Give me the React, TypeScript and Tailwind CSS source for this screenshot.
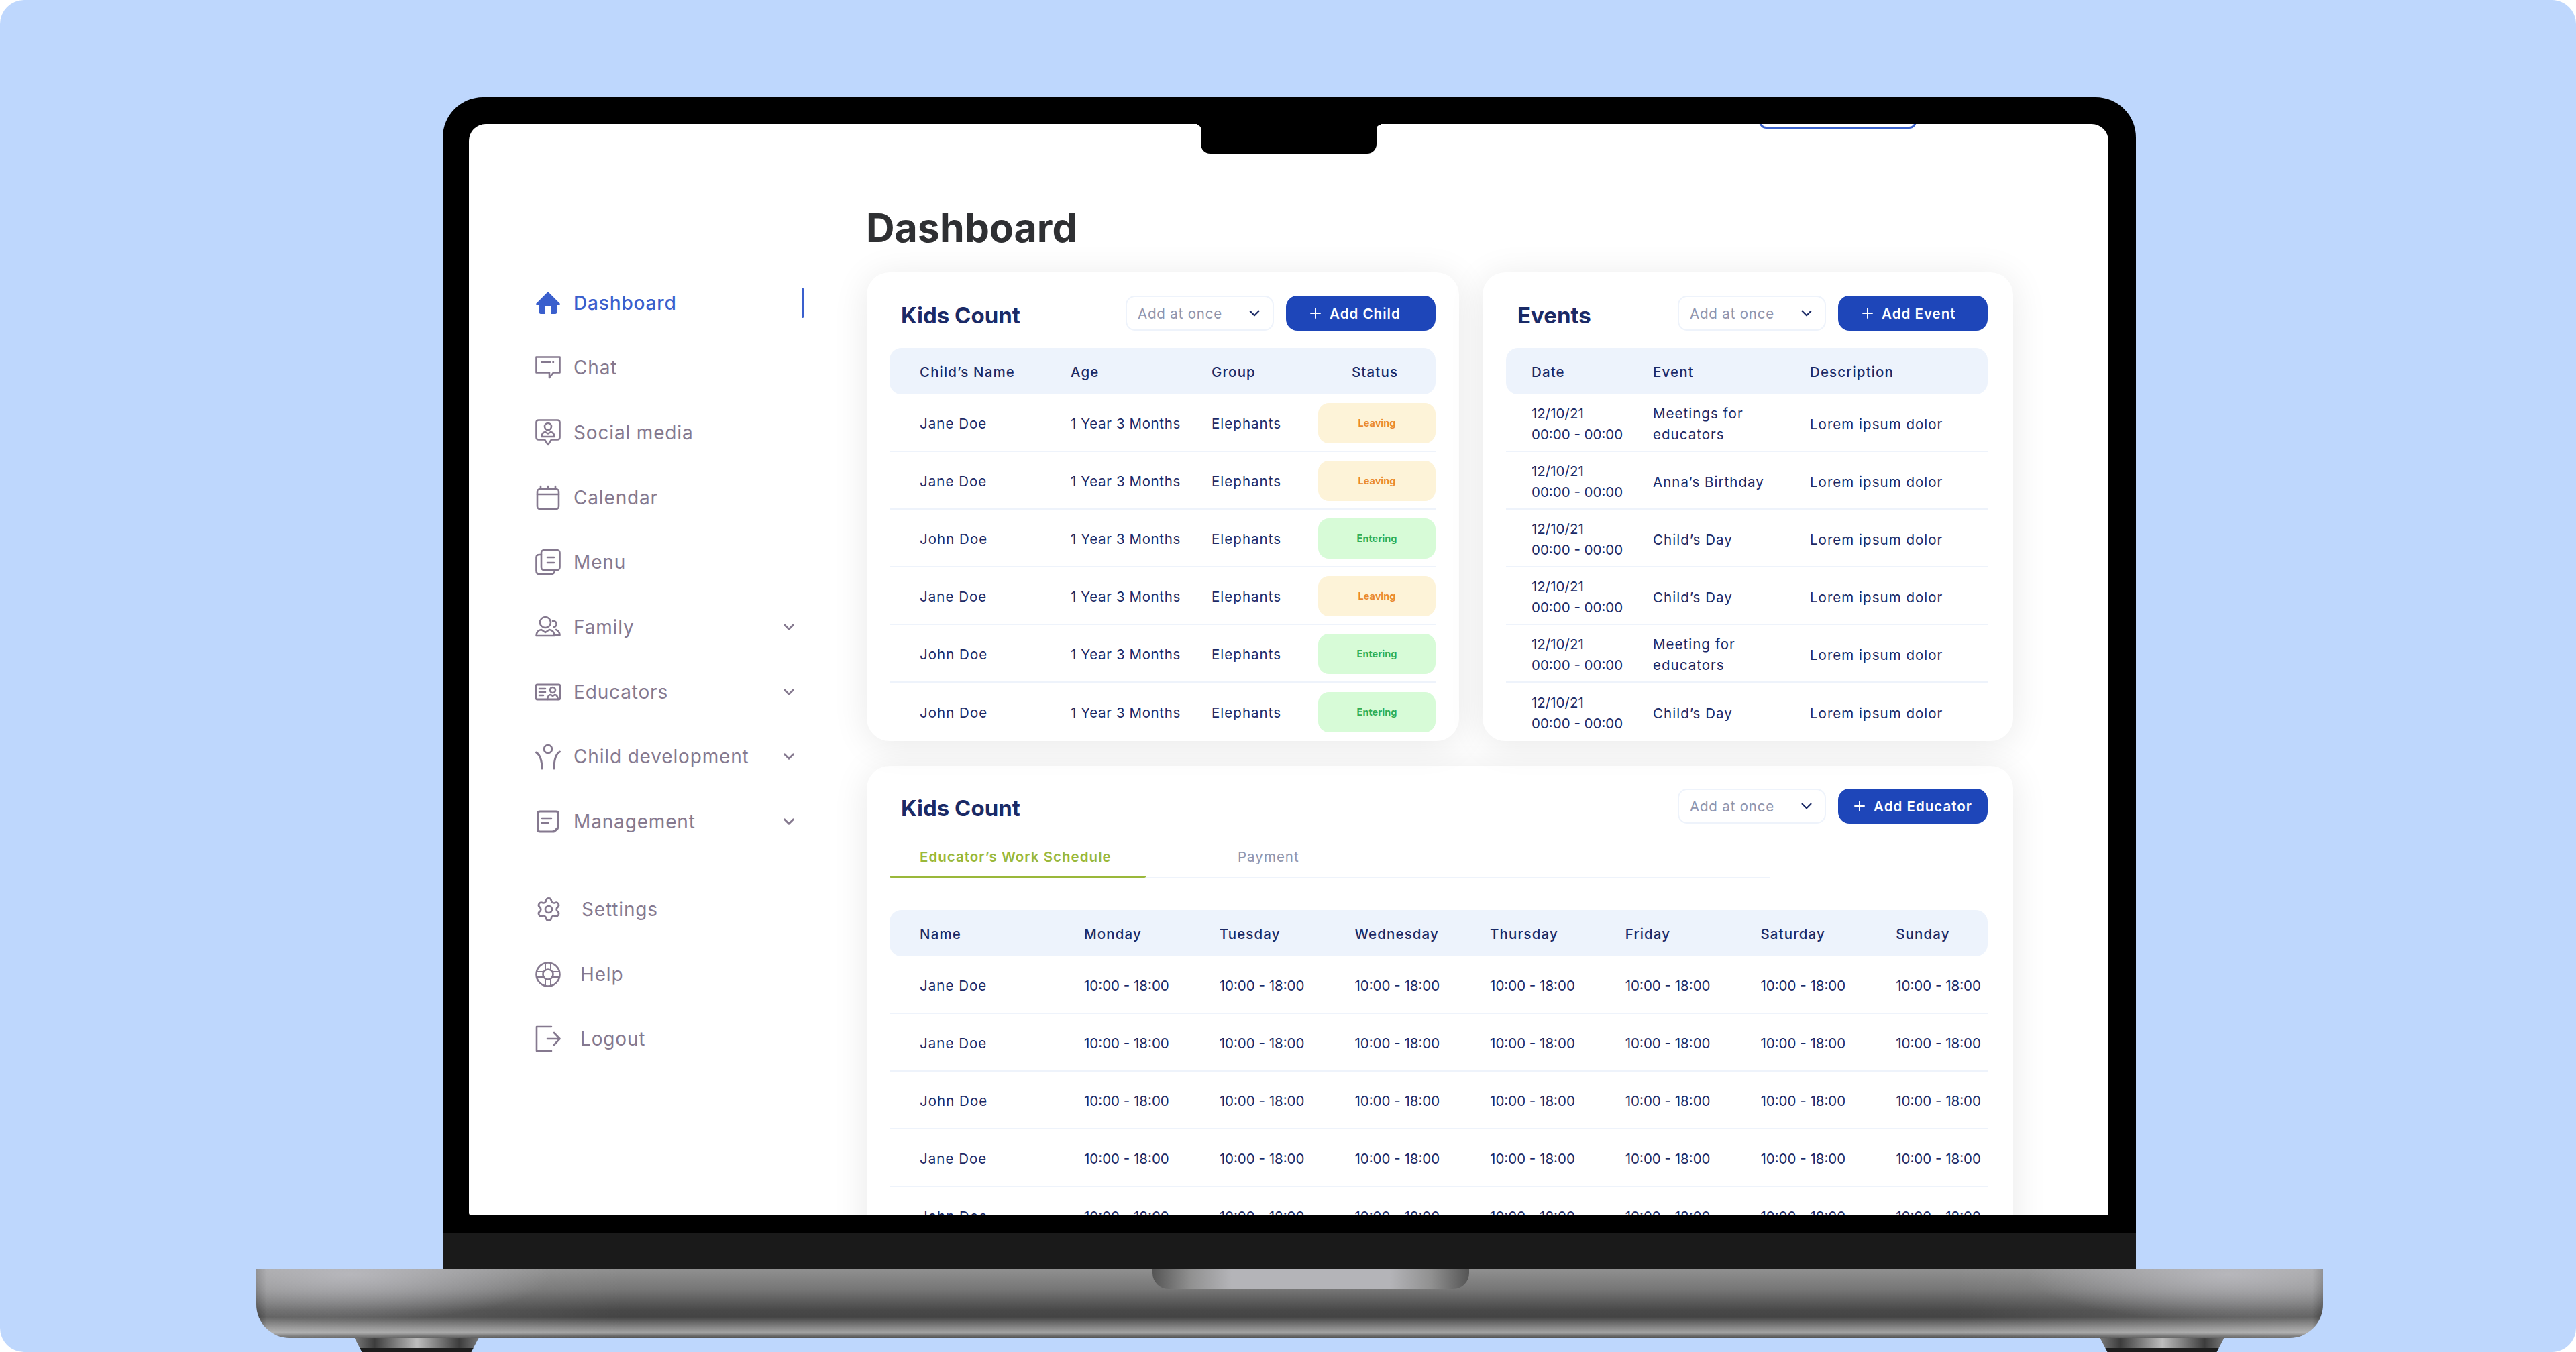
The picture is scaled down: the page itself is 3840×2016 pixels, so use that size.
import React from 'react';
import { Settings, Plus, ChevronDown } from 'lucide-react';

const NAVY = 'text-[#1b2a66]';
const CELL = 'text-[20.5px] tracking-[0.05em]';

const IconHome = () => (
    <svg width="38" height="40" viewBox="0 0 38 40" fill="#3a5fcd">
        <path d="M19 3 L37 21 Q37.5 23 35 23 L32 23 L32 34 Q32 36 30 36 L24 36 L24 25 L14 25 L14 36 L8 36 Q6 36 6 34 L6 23 L3 23 Q0.5 23 1 21 Z" />
    </svg>
);

const stroke = { fill: 'none', stroke: '#85798f', strokeWidth: 2.6, strokeLinecap: 'round' as const, strokeLinejoin: 'round' as const };

const IconChat = () => (
    <svg width="38" height="40" viewBox="0 0 38 40" {...stroke}>
        <path d="M1.5 4.5 H36.5 V27.5 H27 L21 35 V27.5 H1.5 Z" />
        <path d="M10 12 H22 M26.5 12 H27" />
    </svg>
);
const IconSocial = () => (
    <svg width="38" height="40" viewBox="0 0 38 40" {...stroke}>
        <path d="M5 1.5 H33 Q36.5 1.5 36.5 5 V27 Q36.5 30.5 33 30.5 H24 L19 38 L14 30.5 H5 Q1.5 30.5 1.5 27 V5 Q1.5 1.5 5 1.5 Z" />
        <circle cx="19" cy="11" r="5" />
        <path d="M9.5 26 Q10 19.5 15 19 L19 21.5 L23 19 Q28 19.5 28.5 26 Z" />
    </svg>
);
const IconCalendar = () => (
    <svg width="38" height="40" viewBox="0 0 38 40" {...stroke}>
        <rect x="3" y="7" width="32" height="30" rx="4" />
        <path d="M3 15 H35 M8 3 V7 M19 3 V7 M30 3 V7" />
    </svg>
);
const IconMenu = () => (
    <svg width="38" height="40" viewBox="0 0 38 40" {...stroke}>
        <rect x="9" y="2" width="27.5" height="30" rx="4" />
        <path d="M9 9 H6 Q1.5 9 1.5 13 V33 Q1.5 38 6 38 H24 Q29 38 29 32" />
        <path d="M18 13 H28 M18 21 H28" />
    </svg>
);
const IconFamily = () => (
    <svg width="38" height="40" viewBox="0 0 38 40" {...stroke}>
        <circle cx="15" cy="13" r="8" />
        <path d="M1.5 33 Q2 25 9 24 L15 28 L21 24 Q28 25 28.5 33 Z" />
        <path d="M26 11 A4.5 4.5 0 1 1 28 20 M31 24 Q36 26 36.5 32 H31" />
    </svg>
);
const IconEducators = () => (
    <svg width="38" height="40" viewBox="0 0 38 40" {...stroke}>
        <rect x="1.5" y="9" width="35" height="22" rx="1.5" strokeWidth="3" />
        <path d="M6 15 H15 M6 20 H15 M6 25 H12" />
        <circle cx="26" cy="17" r="4" />
        <path d="M18 31 Q19 24 23 24 L26 26 L29 24 Q33 24 34 31" />
    </svg>
);
const IconChild = () => (
    <svg width="38" height="40" viewBox="0 0 38 40" {...stroke}>
        <circle cx="19" cy="9" r="6" />
        <path d="M1.5 14 Q10 20 10 38 M36.5 13 Q28 18 28 38" strokeWidth="3" />
    </svg>
);
const IconManagement = () => (
    <svg width="38" height="40" viewBox="0 0 38 40" {...stroke}>
        <path d="M7 5 H31 Q34.5 5 34.5 8.5 V28 L28 35 H7 Q3.5 35 3.5 31.5 V8.5 Q3.5 5 7 5 Z" strokeWidth="3" />
        <path d="M10 15 H24 M10 22 H19 M34 27 Q34 34 27 34" />
    </svg>
);
const IconHelp = () => (
    <svg width="38" height="40" viewBox="0 0 38 40" {...stroke}>
        <circle cx="19" cy="20" r="17.5" />
        <circle cx="19" cy="20" r="7.5" />
        <path d="M15 4 V13 M23 4 V13 M15 27 V36 M23 27 V36 M3 16 H12 M3 24 H12 M26 16 H35 M26 24 H35" strokeWidth="2" />
    </svg>
);
const IconLogout = () => (
    <svg width="38" height="40" viewBox="0 0 38 40" {...stroke}>
        <path d="M24 2 H2 V38 H24" />
        <path d="M18 20 H36 M28 11 L36.5 20 L28 29" />
    </svg>
);

const mainNav = [
    { label: 'Chat', icon: <IconChat /> },
    { label: 'Social media', icon: <IconSocial /> },
    { label: 'Calendar', icon: <IconCalendar /> },
    { label: 'Menu', icon: <IconMenu /> },
    { label: 'Family', icon: <IconFamily />, chevron: true },
    { label: 'Educators', icon: <IconEducators />, chevron: true },
    { label: 'Child development', icon: <IconChild />, chevron: true },
    { label: 'Management', icon: <IconManagement />, chevron: true },
];

const bottomNav = [
    { label: 'Settings', icon: <Settings size={40} strokeWidth={1.6} color="#85798f" /> },
    { label: 'Help', icon: <IconHelp /> },
    { label: 'Logout', icon: <IconLogout /> },
];

const kids = [
    { name: 'Jane Doe', status: 'Leaving' },
    { name: 'Jane Doe', status: 'Leaving' },
    { name: 'John Doe', status: 'Entering' },
    { name: 'Jane Doe', status: 'Leaving' },
    { name: 'John Doe', status: 'Entering' },
    { name: 'John Doe', status: 'Entering' },
];

const events = [
    ['Meetings for', 'educators'],
    ['Anna’s Birthday'],
    ['Child’s Day'],
    ['Child’s Day'],
    ['Meeting for', 'educators'],
    ['Child’s Day'],
];

const days = ['Monday', 'Tuesday', 'Wednesday', 'Thursday', 'Friday', 'Saturday', 'Sunday'];
const educators = ['Jane Doe', 'Jane Doe', 'John Doe', 'Jane Doe', 'John Doe'];

const Controls: React.FC<{ label: string; buttonPad?: string }> = ({ label, buttonPad = 'pl-[32px]' }) => (
    <div className="flex gap-[18px] ml-auto">
        <div className="w-[221px] h-[52px] pt-[3px] rounded-[14px] border-2 border-[#eef3fb] flex items-center justify-between pl-[16px] pr-[14px] text-[20.5px] text-[#8e94ad] tracking-[0.04em]">
            Add at once
            <ChevronDown size={26} strokeWidth={2} color="#1b2a66" className="-mt-[3px]" />
        </div>
        <div className={`w-[223px] h-[52px] pt-[2px] rounded-[17px] bg-[#1e46b9] flex items-center gap-[9px] text-[20.5px] font-semibold text-white tracking-[0.05em] ${buttonPad}`}>
            <Plus size={24} strokeWidth={2} className="-mt-[2px]" />
            {label}
        </div>
    </div>
);

const Card: React.FC<{ className: string; children: React.ReactNode }> = ({ className, children }) => (
    <section className={`bg-white rounded-[34px] shadow-[0_6px_54px_rgba(0,0,0,0.09)] overflow-hidden ${className}`}>
        {children}
    </section>
);

const HeaderRow: React.FC<{ className: string; children: React.ReactNode }> = ({ className, children }) => (
    <div className={`grid h-[69px] pt-[3px] items-center rounded-[18px] bg-[#edf3fc] text-[20.5px] tracking-[0.055em] font-medium ${NAVY} ${className}`}>
        {children}
    </div>
);

export default function App() {
    return (
        <div className="w-[3840px] h-[2016px] bg-white overflow-hidden [font-family:Inter,'Liberation_Sans',sans-serif]">
            <div className="w-full h-full rounded-[36px] bg-[#bed7fd] flex flex-col items-center pt-[145px] pl-[4px]">
                {/* lid */}
                <div className="w-[2524px] h-[1747px] rounded-t-[60px] bg-black flex flex-col">
                    <div className="h-[1693px] pl-[39px] pr-[41px] pt-[40px]">
                        <div className="relative w-[2444px] h-[1627px] bg-white rounded-t-[25px] rounded-b-[4px] overflow-hidden flex">
                            {/* notch */}
                            <div className="absolute z-10 top-0 left-[1091px] w-[262px] h-[44px] bg-black rounded-b-[14px]" />
                            <div className="absolute z-10 top-0 left-[1085px] w-[6px] h-[8px] bg-[radial-gradient(circle_at_0_100%,transparent_6px,#000_7px)]" />
                            <div className="absolute z-10 top-0 left-[1353px] w-[6px] h-[8px] bg-[radial-gradient(circle_at_100%_100%,transparent_6px,#000_7px)]" />
                            {/* scrolled-off button */}
                            <div className="absolute -top-[40px] left-[1923px] w-[235px] h-[47px] rounded-[11px] border-[3px] border-[#3b62cc]" />

                            <aside className="w-[593px] shrink-0 pl-[99px] pt-[218px] text-[28px] tracking-[0.03em] text-[#85798f]">
                                <div className="w-[400px] h-[97px] flex items-center gap-[19px] text-[#3a5fcd] font-medium">
                                    <IconHome />
                                    Dashboard
                                    <span className="ml-auto w-[3px] h-[45px] rounded-full bg-[#3a5fcd]" />
                                </div>
                                {mainNav.map(item => (
                                    <div key={item.label} className="w-[387px] h-[96.7px] flex items-center gap-[19px]">
                                        {item.icon}
                                        {item.label}
                                        {item.chevron && (
                                            <ChevronDown size={26} strokeWidth={2.6} className="ml-auto -mr-[4px]" color="#85798f" />
                                        )}
                                    </div>
                                ))}
                                <div className="mt-[34px]">
                                    {bottomNav.map(item => (
                                        <div key={item.label} className="h-[96.7px] flex items-center gap-[29px]">
                                            {item.icon}
                                            {item.label}
                                        </div>
                                    ))}
                                </div>
                            </aside>

                            <main className="w-[1709px] shrink-0 pt-[120px]">
                                <h1 className="text-[59px] leading-[70px] font-bold text-[#2f3033] mb-[31px] -ml-[1px]">Dashboard</h1>

                                <div className="flex gap-[35px] mb-[37px]">
                                    <Card className="w-[883px] h-[699px] pt-[35px] pl-[34px] pr-[35px]">
                                        <div className="flex items-center h-[52px] mb-[26px]">
                                            <h2 className={`pl-[17px] mt-[8px] text-[33px] font-bold ${NAVY}`}>Kids Count</h2>
                                            <Controls label="Add Child" />
                                        </div>
                                        <HeaderRow className="grid-cols-[270px_210px_159px_175px]">
                                            <span className="pl-[45px]">Child’s Name</span>
                                            <span>Age</span>
                                            <span>Group</span>
                                            <span className="pl-[50px]">Status</span>
                                        </HeaderRow>
                                        {kids.map((kid, index) => (
                                            <div key={index} className={`grid grid-cols-[270px_210px_159px_175px] items-center h-[86px] pt-[5px] border-b-2 border-[#eef3fb] last:border-b-0 ${CELL} ${NAVY}`}>
                                                <span className="pl-[45px]">{kid.name}</span>
                                                <span className="tracking-[0.03em]">1 Year 3 Months</span>
                                                <span>Elephants</span>
                                                <span className={`h-[60px] -mt-[4px] rounded-[16px] flex items-center justify-center text-[14.5px] tracking-normal font-bold ${kid.status === 'Leaving' ? 'bg-[#fdf3d8] text-[#ea8a2e]' : 'bg-[#d7fbd7] text-[#2fae57]'}`}>
                                                    {kid.status}
                                                </span>
                                            </div>
                                        ))}
                                    </Card>

                                    <Card className="w-[791px] h-[699px] pt-[35px] pl-[35px] pr-[38px]">
                                        <div className="flex items-center h-[52px] mb-[26px]">
                                            <h2 className={`pl-[17px] mt-[8px] text-[33px] font-bold ${NAVY}`}>Events</h2>
                                            <Controls label="Add Event" />
                                        </div>
                                        <HeaderRow className="grid-cols-[219px_234px_265px]">
                                            <span className="pl-[38px]">Date</span>
                                            <span>Event</span>
                                            <span>Description</span>
                                        </HeaderRow>
                                        {events.map((lines, index) => (
                                            <div key={index} className={`grid grid-cols-[219px_234px_265px] items-center h-[86px] pt-[4px] border-b-2 border-[#eef3fb] last:border-b-0 leading-[31px] ${CELL} ${NAVY}`}>
                                                <span className="pl-[38px] tracking-normal">12/10/21<br />00:00 - 00:00</span>
                                                <span>{lines.map(line => <div key={line}>{line}</div>)}</span>
                                                <span>Lorem ipsum dolor</span>
                                            </div>
                                        ))}
                                    </Card>
                                </div>

                                <Card className="w-[1709px] h-[900px] pt-[34px] pl-[34px] pr-[38px]">
                                    <div className="flex items-center h-[52px]">
                                        <h2 className={`pl-[17px] mt-[8px] text-[33px] font-bold ${NAVY}`}>Kids Count</h2>
                                        <Controls label="Add Educator" buttonPad="pl-[20px]" />
                                    </div>
                                    <div className={`w-[1312px] h-[81px] flex items-end border-b-2 border-[#eef3fb] mb-[48px] ${CELL}`}>
                                        <div className="w-[382px] h-[46px] -mb-[2px] pl-[45px] border-b-[3px] border-[#9ab83a] rounded-b-[2px] font-semibold text-[#9ab83a]">
                                            Educator’s Work Schedule
                                        </div>
                                        <div className="ml-[137px] h-[46px] pt-[2px] text-[#8e94ad]">Payment</div>
                                    </div>
                                    <HeaderRow className="grid-cols-[290px_repeat(7,201.7px)]">
                                        <span className="pl-[45px]">Name</span>
                                        {days.map(day => <span key={day}>{day}</span>)}
                                    </HeaderRow>
                                    {educators.map((name, index) => (
                                        <div key={index} className={`grid grid-cols-[290px_repeat(7,201.7px)] items-center h-[86px] pt-[5px] border-b-2 border-[#eef3fb] ${CELL} ${NAVY}`}>
                                            <span className="pl-[45px]">{name}</span>
                                            {days.map(day => <span key={day} className="tracking-normal">10:00 - 18:00</span>)}
                                        </div>
                                    ))}
                                </Card>
                            </main>
                        </div>
                    </div>
                    <div className="h-[54px] bg-[#1a1a1a]" />
                </div>

                {/* base */}
                <div className="w-[3081px] h-[103px] rounded-b-[50px] flex justify-center bg-[radial-gradient(ellipse_300px_70px_at_140px_8px,rgba(190,190,196,0.8),transparent),radial-gradient(ellipse_300px_70px_at_2940px_8px,rgba(190,190,196,0.8),transparent),linear-gradient(to_right,rgba(0,0,0,0.3),transparent_16px,transparent_3065px,rgba(0,0,0,0.3)),linear-gradient(to_right,rgba(255,255,255,0.18),transparent_550px,transparent_2530px,rgba(255,255,255,0.18)),linear-gradient(to_bottom,#909090_0,#777777_30px,#484848_62px,#444444_72px,#8a8a8a_88px,#a2a2a2_95px,#666666_100px,#555555_103px)]">
                    <div className="ml-[63px] w-[472px] h-[30px] rounded-b-[24px] bg-[linear-gradient(to_right,#555555,#909090_12%,#b4b4b8_25%,#b4b4b8_75%,#909090_88%,#555555)]" />
                </div>
                <div className="w-[3081px] h-[21px] flex justify-between px-[147px]">
                    {[0, 1].map(foot => (
                        <div key={foot} className="w-[185px] h-[21px] [clip-path:polygon(0_0,100%_0,94%_100%,6%_100%)] bg-[linear-gradient(to_bottom,transparent_15px,#1d1d1d_15px),linear-gradient(to_right,#777777,#3d3d3d_16%,#bdbdbd_50%,#3d3d3d_84%,#777777)]" />
                    ))}
                </div>
            </div>
        </div>
    );
}
